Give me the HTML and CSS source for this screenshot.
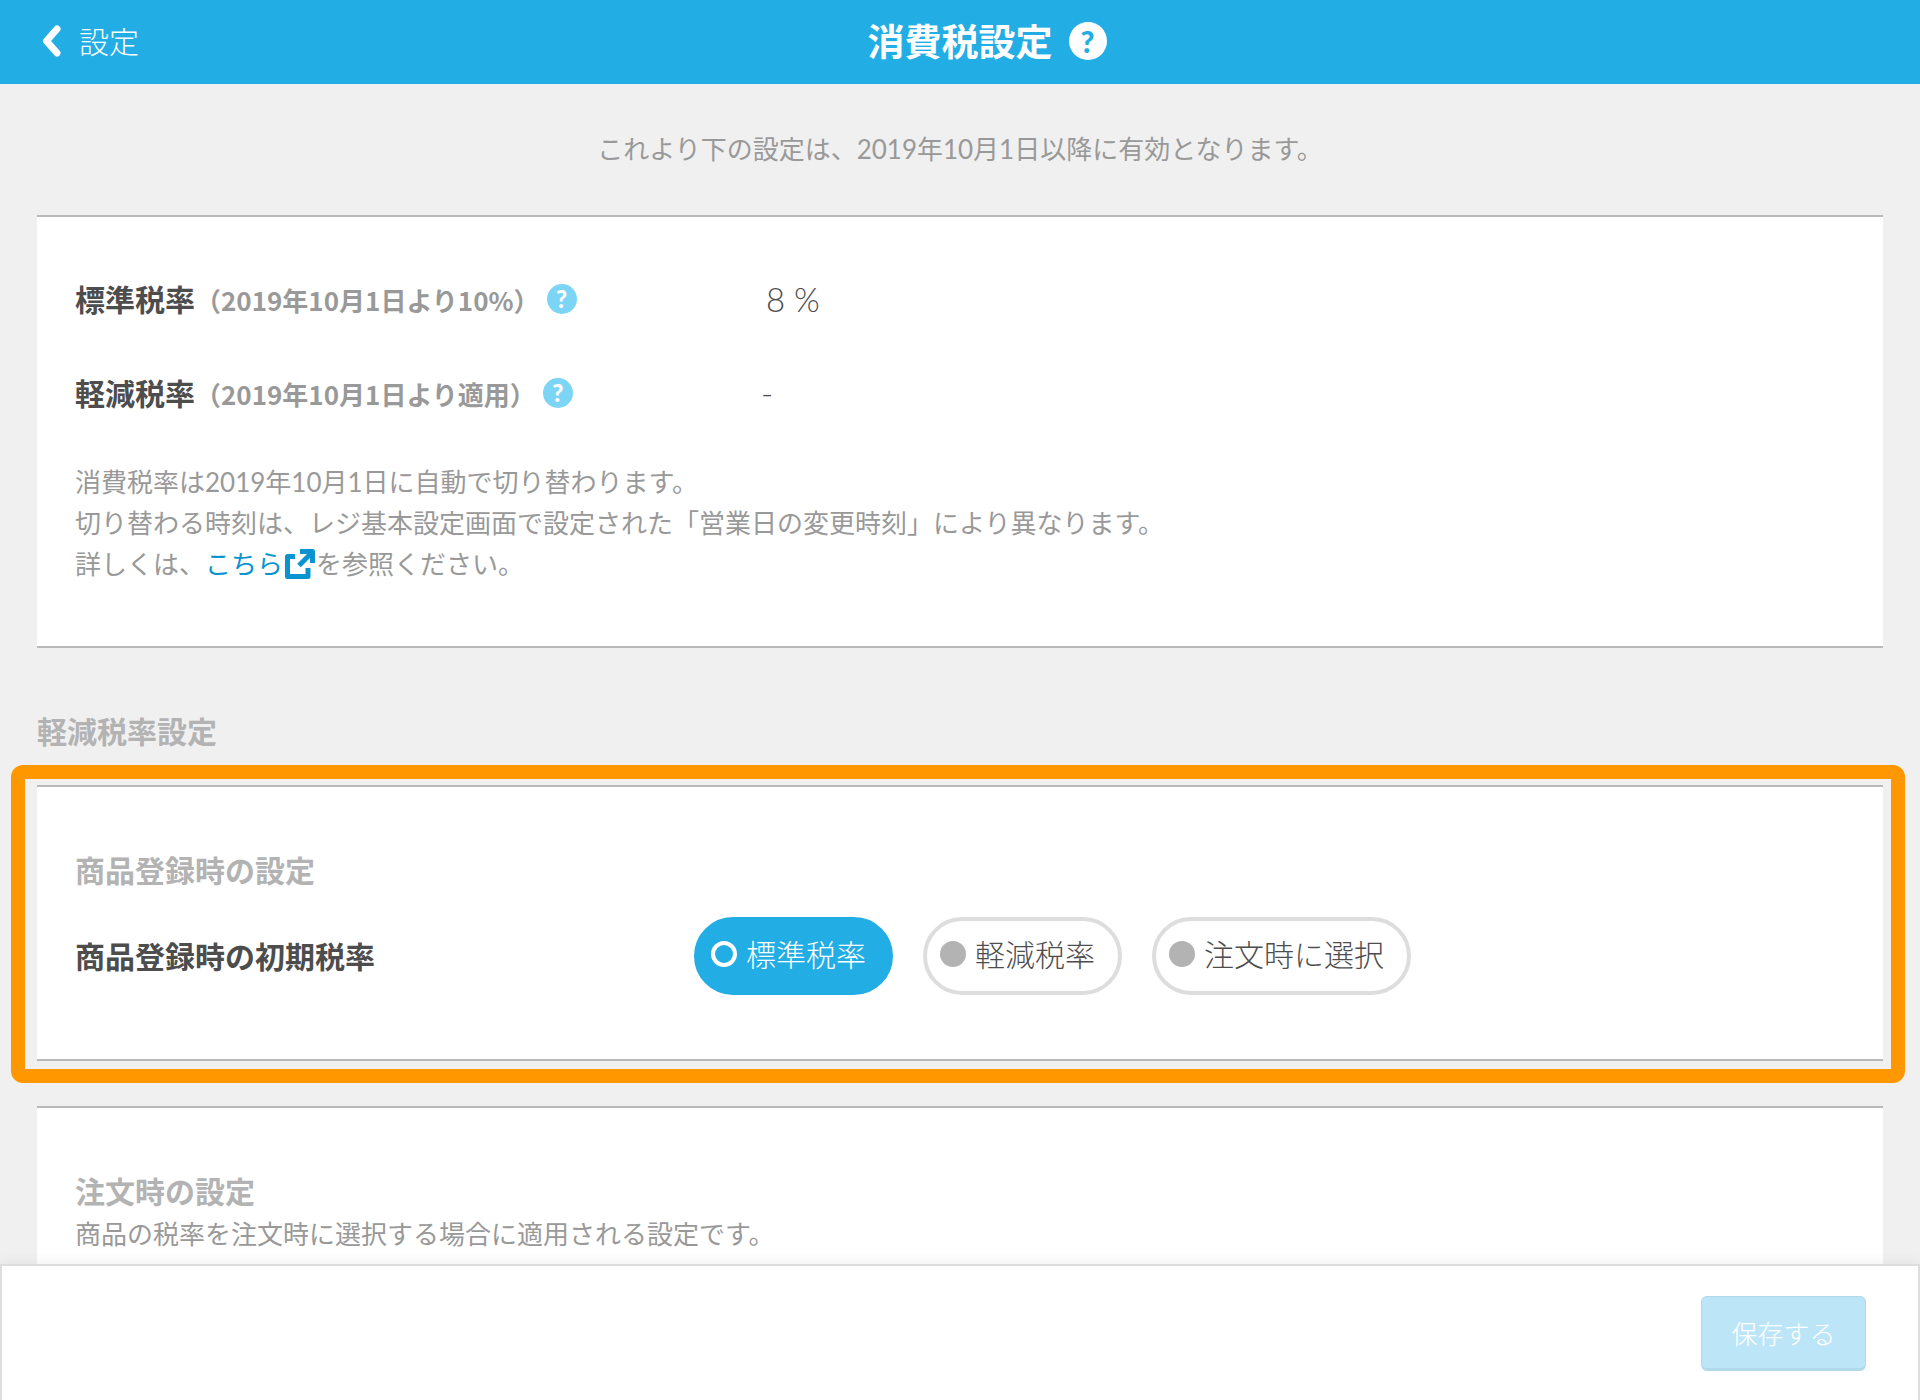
FILE: index.html
```html
<!DOCTYPE html>
<html lang="ja">
<head>
<meta charset="utf-8">
<meta name="viewport" content="width=device-width, initial-scale=1">
<title>消費税設定</title>
<link rel="stylesheet" href="styles.css">
</head>
<body>
<header class="header">
  <a class="back" href="#">
    <svg class="back-icon" viewBox="0 0 20 32" aria-hidden="true"><path d="M16 4 5.500 16 16 28"/></svg>
    <span>設定</span>
  </a>
  <h1 class="title">消費税設定</h1>
  <button class="help help-large" type="button" aria-label="ヘルプ">?</button>
</header>

<main class="main">
  <p class="notice">これより下の設定は、2019年10月1日以降に有効となります。</p>

  <section class="card rates">
    <dl class="rate-list">
      <div class="row">
        <dt class="label">標準税率<span class="hint">（2019年10月1日より10%）</span><button class="help" type="button" aria-label="標準税率のヘルプ">?</button></dt>
        <dd class="value value-rate">8 %</dd>
      </div>
      <div class="row">
        <dt class="label">軽減税率<span class="hint">（2019年10月1日より適用）</span><button class="help" type="button" aria-label="軽減税率のヘルプ">?</button></dt>
        <dd class="value">-</dd>
      </div>
    </dl>
    <p class="text">消費税率は2019年10月1日に自動で切り替わります。<br>
    切り替わる時刻は、レジ基本設定画面で設定された「営業日の変更時刻」により異なります。<br>
    詳しくは、<a class="link" href="#">こちら<svg class="external" viewBox="0 0 30 30" aria-hidden="true"><path d="M10 7.500H2.500V27.500H23V19"/><path d="M15 2.500H27.500V14"/><path d="M14 16.500 27 3.500"/></svg></a>を参照ください。</p>
  </section>

  <h2 class="section-title">軽減税率設定</h2>

  <div class="highlight">
    <section class="card product">
      <h3 class="card-title">商品登録時の設定</h3>
      <div class="row" role="radiogroup" aria-labelledby="initial-rate">
        <span class="label" id="initial-rate">商品登録時の初期税率</span>
        <div class="options">
          <label class="option"><input class="radio" type="radio" name="rate" checked>標準税率</label>
          <label class="option"><input class="radio" type="radio" name="rate">軽減税率</label>
          <label class="option"><input class="radio" type="radio" name="rate">注文時に選択</label>
        </div>
      </div>
    </section>
  </div>

  <section class="card order">
    <h3 class="card-title">注文時の設定</h3>
    <p class="text">商品の税率を注文時に選択する場合に適用される設定です。</p>
  </section>
</main>

<footer class="footer">
  <button class="save" type="button">保存する</button>
</footer>
</body>
</html>
```

FILE: styles.css
```css
* {
  box-sizing: border-box;
}

body {
  display: flex;
  flex-direction: column;
  min-height: 100vh;
  margin: 0;
  background: #f0f0f0;
  color: #4d4d4d;
  font-family: Lato, "Noto Sans CJK JP", sans-serif;
  font-size: 26px;
  font-weight: 400;
  line-height: 41px;
}

h1,
h2,
h3,
p,
dl,
dd {
  margin: 0;
}

button {
  padding: 0;
  border: 0;
  font-family: inherit;
}

.header {
  display: grid;
  grid-template-columns: 1fr auto 1fr;
  align-items: center;
  column-gap: 16px;
  height: 84px;
  padding: 0 41px 2px;
  background: #22ade5;
  color: #fff;
}

.back {
  display: flex;
  align-items: center;
  gap: 18px;
  color: inherit;
  font-size: 30px;
  font-weight: 300;
  text-decoration: none;
}

.back-icon {
  width: 20px;
  height: 32px;
  fill: none;
  stroke: #fff;
  stroke-width: 7;
  stroke-linecap: round;
  stroke-linejoin: round;
}

.title {
  font-size: 37px;
  font-weight: 700;
}

.help {
  width: 30px;
  height: 30px;
  border-radius: 50%;
  background: #7dd5f5;
  color: #fff;
  font-size: 24px;
  font-weight: 900;
  line-height: 30px;
  text-align: center;
}

.help-large {
  width: 38px;
  height: 38px;
  background: #fff;
  color: #22ade5;
  font-size: 30px;
  line-height: 38px;
}

.main {
  display: flex;
  flex: 1;
  flex-direction: column;
  padding: 0 37px;
}

.notice {
  padding: 45px 0;
  color: #999;
  text-align: center;
}

.card {
  padding: 0 38px;
  border: solid #b9b9b9;
  border-width: 2px 0;
  background: #fff;
}

.rates {
  padding-top: 35px;
  padding-bottom: 61px;
}

.rate-list {
  margin-bottom: 22px;
}

.row {
  display: grid;
  grid-template-columns: 619px 1fr;
  align-items: center;
}

.rate-list .row {
  height: 94px;
}

.label {
  display: flex;
  align-items: center;
  font-size: 30px;
  font-weight: 700;
}

.hint {
  margin-right: 7px;
  color: #999;
  font-family: "Noto Sans CJK JP", sans-serif;
  font-size: 26px;
}

.value {
  padding-left: 67px;
  font-size: 33px;
  font-weight: 300;
}

.value-rate {
  padding-left: 72px;
}

.text {
  color: #999;
}

.link {
  color: #0a94cf;
  text-decoration: none;
}

.external {
  width: 30px;
  height: 30px;
  margin: 0 1px 0 2px;
  vertical-align: -5px;
  fill: none;
  stroke: #0a94cf;
  stroke-width: 5;
  stroke-linejoin: round;
}

.section-title,
.card-title {
  color: #b3b3b3;
  font-size: 30px;
  font-weight: 700;
}

.section-title {
  margin-top: 63px;
  margin-bottom: 13px;
}

.highlight {
  margin: 0 -22px 23px -26px;
  padding: 6px 8px 8px 12px;
  border: 14px solid #ff9800;
  border-radius: 12px;
}

.product {
  padding-top: 63px;
  padding-bottom: 64px;
}

.product .card-title {
  margin-bottom: 26px;
}

.options {
  display: flex;
  gap: 30px;
}

.option {
  display: flex;
  align-items: center;
  gap: 9px;
  height: 78px;
  padding: 0 23px 4px 13px;
  border: 4px solid #ddd;
  border-radius: 39px;
  font-size: 30px;
  font-weight: 300;
}

.option:has(:checked) {
  border-color: #22ade5;
  background: #22ade5;
  color: #fff;
}

.radio {
  width: 26px;
  height: 26px;
  margin: 0;
  border-radius: 50%;
  background: #b3b3b3;
  appearance: none;
}

.radio:checked {
  border: 4px solid #fff;
  background: transparent;
}

.order {
  flex: 1;
  padding-top: 63px;
  border-bottom: 0;
}

.order .card-title {
  margin-bottom: 2px;
}

.footer {
  display: flex;
  align-items: center;
  justify-content: flex-end;
  height: 136px;
  padding: 0 52px;
  border: 2px solid #ddd;
  border-bottom: 0;
  background: #fff;
  box-shadow: 0 -2px 12px rgba(0, 0, 0, 0.06);
}

.save {
  width: 165px;
  height: 75px;
  border: 1px solid #b0d9ea;
  border-bottom-width: 3px;
  border-radius: 6px;
  background: #bce6f8;
  color: #fff;
  font-size: 26px;
  font-weight: 300;
}
```
